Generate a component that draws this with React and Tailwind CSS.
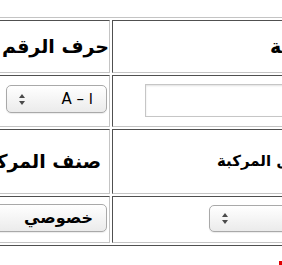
import React from "react";

const arabic = { fontFamily: '"DejaVu Sans", sans-serif' };

function Arrows() {
  return (
    <svg width="6" height="11" viewBox="0 0 6 11" className="shrink-0">
      <path d="M3 0 L6 4 L0 4 Z" fill="#4a4a4a" />
      <path d="M0 7 L6 7 L3 11 Z" fill="#4a4a4a" />
    </svg>
  );
}

// mac style popup select
function PopSelect({ label, width, height, bold = false }) {
  return (
    <div
      className="flex items-center justify-between rounded-[5px] border border-[#a9a9a9] bg-gradient-to-b from-white to-[#ebebeb] pl-[12px] pr-[13px] shadow-[0_1px_1px_rgba(0,0,0,0.08)] shrink-0"
      style={{ width, height }}
    >
      <Arrows />
      <span
        className={`${bold ? "text-[16px] font-bold" : "text-[15px]"} text-black whitespace-nowrap`}
        style={arabic}
      >
        {label}
      </span>
    </div>
  );
}

const cell =
  "border border-t-[#505050] border-l-[#505050] border-b-[#c4c4c4] border-r-[#c4c4c4] overflow-hidden";

export default function App() {
  return (
    <div className="w-[282px] h-[265px] overflow-hidden bg-white">
      <div className="mt-[17px] ml-[-40px] w-[415px] border border-t-[#c4c4c4] border-l-[#c4c4c4] border-b-[#505050] border-r-[#505050] p-[2px] grid grid-cols-[147px_260px] grid-rows-[53px_52px_65px_47px] gap-[2px]">
        {/* row 1 */}
        <div className={`${cell} flex items-center justify-end`}>
          <span dir="rtl" className="text-[19px] font-bold text-black whitespace-nowrap shrink-0" style={arabic}>
            حرف الرقم
          </span>
        </div>
        <div className={`${cell} flex items-center justify-start pl-[157px]`}>
          <span dir="rtl" className="text-[19px] font-bold text-black whitespace-nowrap shrink-0" style={arabic}>
            رقم اللوحة
          </span>
        </div>

        {/* row 2 */}
        <div className={`${cell} flex items-start justify-end pr-[2px] pt-[9px]`}>
          <PopSelect label="A  –  ا" width={101} height={28} />
        </div>
        <div className={`${cell} flex items-start justify-start pl-[32px] pt-[8px]`}>
          <div className="w-[220px] h-[33px] shrink-0 border border-[#c6c6c6] bg-white shadow-[inset_0_1px_2px_rgba(0,0,0,0.12)]" />
        </div>

        {/* row 3 */}
        <div className={`${cell} flex items-center justify-end pr-[8px]`}>
          <span dir="rtl" className="text-[19px] font-bold text-black whitespace-nowrap shrink-0" style={arabic}>
            صنف المركبة
          </span>
        </div>
        <div className={`${cell} flex items-center justify-start pl-[104px]`}>
          <span dir="rtl" className="text-[15px] font-bold text-black whitespace-nowrap shrink-0" style={arabic}>
            شكل المركبة
          </span>
        </div>

        {/* row 4 */}
        <div className={`${cell} flex items-start justify-end pr-[2px] pt-[7px]`}>
          <PopSelect label="خصوصي" width={140} height={28} bold />
        </div>
        <div className={`${cell} flex items-start justify-start pl-[96px] pt-[8px]`}>
          <PopSelect label="" width={160} height={27} />
        </div>
      </div>
      <div className="mt-[15px] flex justify-end">
        <div className="w-[3px] h-[4px] bg-[#e00000]" />
      </div>
    </div>
  );
}
